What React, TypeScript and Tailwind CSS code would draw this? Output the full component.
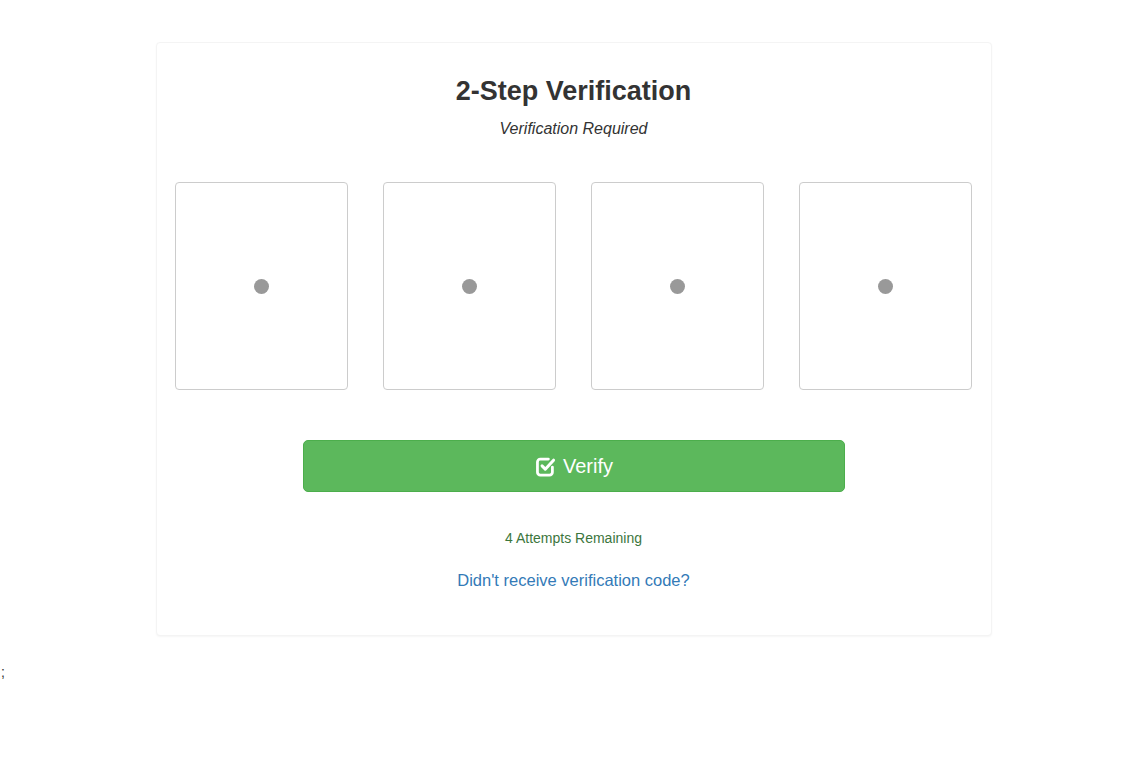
const CheckIcon = () => (
  <svg viewBox="0 0 20 20" className="w-[23px] h-[23px]" fill="none" stroke="currentColor" strokeLinecap="round" strokeLinejoin="round">
    <path d="M16 10.5V15a2.5 2.5 0 0 1-2.5 2.5h-8A2.5 2.5 0 0 1 3 15V6a2.5 2.5 0 0 1 2.5-2.5h7" strokeWidth="2.4" />
    <path d="M7 9.5l2.8 2.8L17 4.5" strokeWidth="2.6" />
  </svg>
);

const CodeBox = () => (
  <div className="w-[173px] h-[208px] border border-[#cccccc] rounded-[4px] bg-white flex items-center justify-center">
    <span className="w-[15px] h-[15px] rounded-full bg-[#999999]" />
  </div>
);

const App = () => {
  return (
    <div className="min-h-screen bg-white text-[14px] text-[#333333] font-['Liberation_Sans',Arial,sans-serif] pt-[42px]">
      <div className="ml-[156px] w-[836px] bg-white border border-[#f4f4f4] rounded-[4px] shadow-[0_1px_2px_rgba(0,0,0,0.04)] pl-[18px] pr-[19px] pt-[33px] pb-[43px] flex flex-col items-center">
        <h1 className="text-[27px] leading-[31px] font-bold text-[#333333]">2-Step Verification</h1>
        <p className="mt-[11px] text-[16px] leading-[22px] italic text-[#333333]">Verification Required</p>
        <div className="mt-[42px] w-full flex justify-between">
          <CodeBox />
          <CodeBox />
          <CodeBox />
          <CodeBox />
        </div>
        <button className="mt-[50px] w-[542px] h-[52px] rounded-[5px] bg-[#5cb85c] border border-[#4cae4c] text-white flex items-center justify-center gap-[6px]">
          <CheckIcon />
          <span className="text-[20px] leading-[24px]">Verify</span>
        </button>
        <p className="mt-[36px] text-[14px] leading-[20px] text-[#3c763d]">4 Attempts Remaining</p>
        <a href="#" className="mt-[20px] text-[16.5px] leading-[24px] text-[#337ab7]">
          Didn't receive verification code?
        </a>
      </div>
      <div className="mt-[26px] px-[1px] leading-[20px]">;</div>
    </div>
  );
};

export default App;
